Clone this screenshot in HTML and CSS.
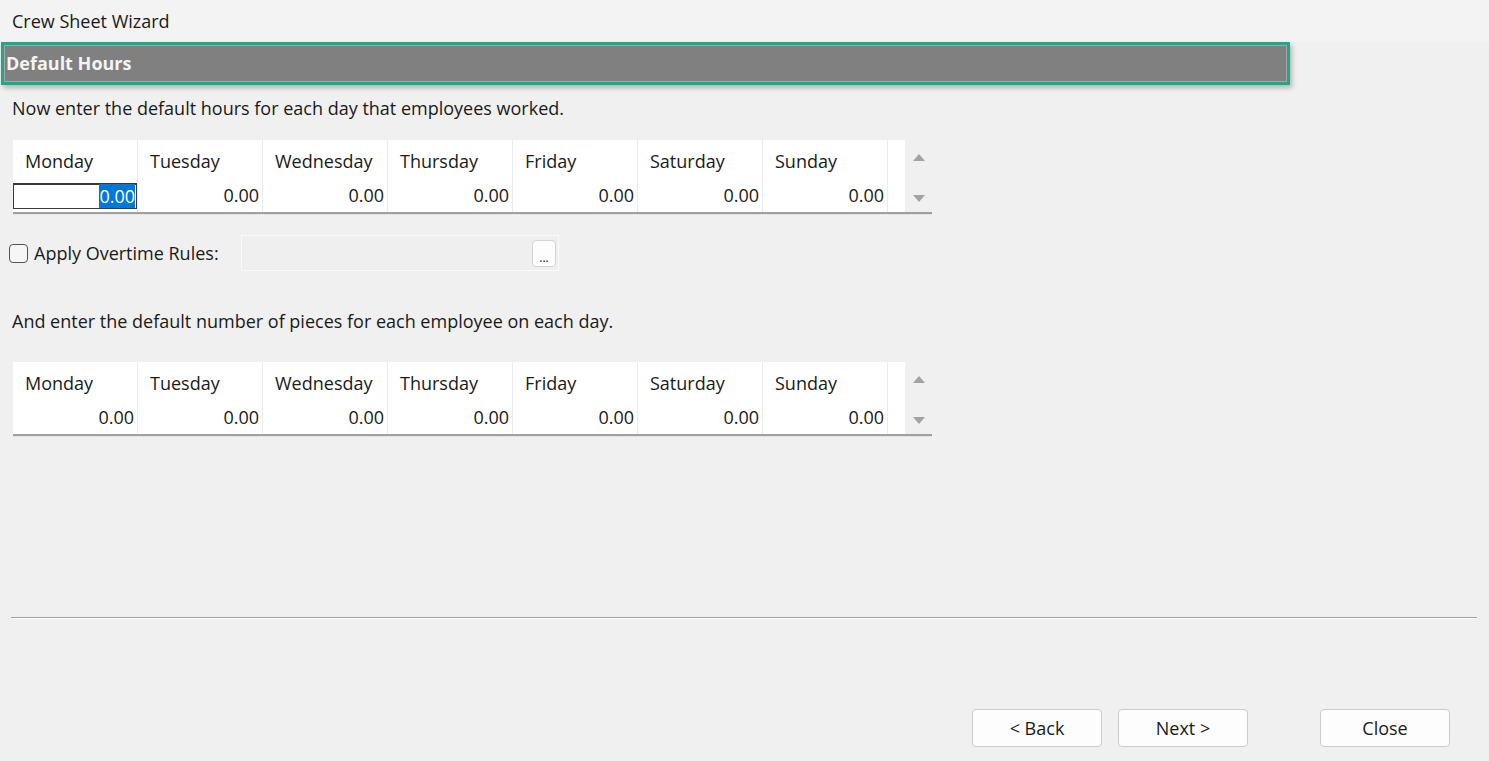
FILE: index.html
```html
<!DOCTYPE html>
<html lang="en">
<head>
  <meta charset="UTF-8" />
  <meta name="viewport" content="width=device-width, initial-scale=1.0"/>
  <title>Crew Sheet Wizard</title>
  <link rel="stylesheet" href="styles.css">
</head>
<body>

  <div class="titlebar">Crew Sheet Wizard</div>

  <div class="page-head">
    <div class="page-head-inner">Default Hours</div>
  </div>

  <p class="prompt prompt-hours">Now enter the default hours for each day that employees worked.</p>

  <!-- Default hours grid -->
  <div class="day-grid" id="hoursGrid">
    <div class="day-col"><span class="day-name">Monday</span><span class="day-value editing"><span class="sel">0.00</span></span></div>
    <div class="day-col"><span class="day-name">Tuesday</span><span class="day-value">0.00</span></div>
    <div class="day-col"><span class="day-name">Wednesday</span><span class="day-value">0.00</span></div>
    <div class="day-col"><span class="day-name">Thursday</span><span class="day-value">0.00</span></div>
    <div class="day-col"><span class="day-name">Friday</span><span class="day-value">0.00</span></div>
    <div class="day-col"><span class="day-name">Saturday</span><span class="day-value">0.00</span></div>
    <div class="day-col"><span class="day-name">Sunday</span><span class="day-value">0.00</span></div>
    <div class="day-filler"></div>
    <div class="spin">
      <span class="arrow up"></span>
      <span class="arrow down"></span>
    </div>
  </div>

  <div class="overtime-row">
    <label class="check-label"><input type="checkbox" id="applyOvertime"> Apply Overtime Rules:</label>
    <div class="rule-box">
      <button type="button" class="browse">...</button>
    </div>
  </div>

  <p class="prompt prompt-pieces">And enter the default number of pieces for each employee on each day.</p>

  <!-- Default pieces grid -->
  <div class="day-grid" id="piecesGrid">
    <div class="day-col"><span class="day-name">Monday</span><span class="day-value">0.00</span></div>
    <div class="day-col"><span class="day-name">Tuesday</span><span class="day-value">0.00</span></div>
    <div class="day-col"><span class="day-name">Wednesday</span><span class="day-value">0.00</span></div>
    <div class="day-col"><span class="day-name">Thursday</span><span class="day-value">0.00</span></div>
    <div class="day-col"><span class="day-name">Friday</span><span class="day-value">0.00</span></div>
    <div class="day-col"><span class="day-name">Saturday</span><span class="day-value">0.00</span></div>
    <div class="day-col"><span class="day-name">Sunday</span><span class="day-value">0.00</span></div>
    <div class="day-filler"></div>
    <div class="spin">
      <span class="arrow up"></span>
      <span class="arrow down"></span>
    </div>
  </div>

  <div class="divider"></div>

  <div class="wizard-buttons">
    <button type="button" class="wiz-btn">&lt; Back</button>
    <button type="button" class="wiz-btn">Next &gt;</button>
    <button type="button" class="wiz-btn close-btn">Close</button>
  </div>

</body>
</html>
```

FILE: styles.css
```css
body {
  font-family: "Open Sans", "Noto Sans", sans-serif; font-size: 18px; color: #1a1a1a;
  margin: 0; padding: 0; background: #f0f0f0;
}
.titlebar {
  height: 42px; line-height: 42px; padding-left: 12px; background: #f3f3f3;
}
.page-head {
  margin-left: 1px; width: 1283px; height: 37px;
  border: 3px solid #17aa8b;
  box-shadow: 2px 3px 5px rgba(0, 0, 0, 0.25);
}
.page-head-inner {
  height: 35px; line-height: 35px; padding-left: 1px;
  background: #808080; border: 1px solid #a6a6a6;
  color: #f4f4f4; font-weight: bold; font-size: 18px;
}
.prompt { margin: 0; padding-left: 12px; line-height: 22px; }
.prompt-hours { margin-top: 12px; }
.prompt-pieces { margin-top: 39px; }

.day-grid {
  display: flex; margin-left: 13px; width: 919px; height: 72px;
  background: #ffffff; border-bottom: 2px solid #a0a0a0;
  box-shadow: 0 1px 0 #e4e4e4;
}
#hoursGrid { margin-top: 21px; }
#piecesGrid { margin-top: 30px; }
.day-col {
  width: 125px; display: flex; flex-direction: column;
  border-right: 1px solid #ececec; box-sizing: border-box;
}
.day-name { padding: 9px 0 0 12px; line-height: 24px; height: 33px; box-sizing: border-box; }
.day-value { text-align: right; padding-right: 3px; line-height: 24px; margin-top: 10px; }
.day-value.editing {
  margin-top: 10px; height: 26px; border: 1px solid #3a3a3a; border-top-width: 2px;
  box-sizing: border-box; line-height: 23px; padding-right: 1px;
}
.sel { background: #0078d7; color: #ffffff; }
.day-filler { width: 17px; border-right: 1px solid #f0f0f0; }
.spin {
  flex: 1; background: #f0f0f0;
  display: flex; flex-direction: column; justify-content: space-between; align-items: center;
  padding: 14px 0 10px;
}
.arrow { width: 0; height: 0; border-left: 6px solid transparent; border-right: 6px solid transparent; }
.arrow.up { border-bottom: 7px solid #a3a3a3; }
.arrow.down { border-top: 7px solid #a3a3a3; }

.overtime-row { display: flex; align-items: center; margin-top: 21px; height: 36px; }
.check-label { display: flex; align-items: center; padding-left: 9px; width: 232px; }
.check-label input {
  appearance: none; width: 19px; height: 19px; margin: 0 6px 0 0;
  border: 1px solid #555; border-radius: 4px; background: #f6f6f6;
}
.rule-box {
  width: 314px; height: 34px; border: 1px solid #f9f9f9; background: #efefef;
  display: flex; justify-content: flex-end; align-items: center; padding-right: 2px;
}
.browse {
  width: 24px; height: 27px; padding: 10px 0 0; font: inherit; font-size: 12px; line-height: 14px;
  background: #fdfdfd; border: 1px solid #d4d4d4; border-radius: 4px; color: #1a1a1a;
}

.divider {
  margin: 181px 12px 0 11px; height: 1px; background: #a0a0a0;
  border-bottom: 1px solid #ffffff;
}
.wizard-buttons { display: flex; margin-top: 90px; padding-left: 972px; }
.wiz-btn {
  width: 130px; height: 38px; margin-right: 16px; font: inherit; font-size: 18px; color: #1a1a1a;
  background: #fdfdfd; border: 1px solid #cccccc; border-radius: 4px;
}
.close-btn { margin-left: 56px; }
```
